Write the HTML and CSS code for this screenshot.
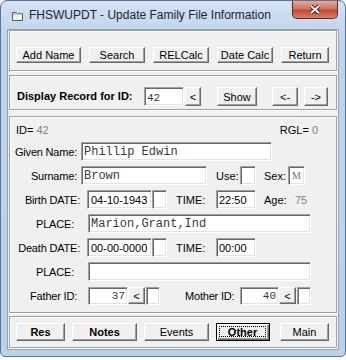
FILE: index.html
```html
<!DOCTYPE html>
<html lang="en">
<head>
  <meta charset="UTF-8" />
  <title>FHSWUPDT - Update Family File Information</title>
  <link rel="stylesheet" href="styles.css">
</head>
<body>

<div class="window">
  <div class="titlebar">
    <svg class="app-icon" width="11" height="11" viewBox="0 0 11 11">
      <path d="M0.5 2.5h4l1 1h5v7h-10z" fill="#f4f4f4" stroke="#5a5a5a"/>
      <path d="M1 4h9" stroke="#9aa4ae"/>
    </svg>
    <span class="title">FHSWUPDT - Update Family File Information</span>
    <div class="close">
      <svg width="14" height="11" viewBox="0 0 14 11">
        <path d="M3 2l8 7M11 2l-8 7" stroke="#4a1c16" stroke-width="4"/>
        <path d="M3 2l8 7M11 2l-8 7" stroke="#fff" stroke-width="2"/>
      </svg>
    </div>
  </div>

  <div class="client">
    <div class="panel toolbar">
      <button class="btn w65">Add Name</button>
      <button class="btn w56">Search</button>
      <button class="btn w56">RELCalc</button>
      <button class="btn w56">Date Calc</button>
      <button class="btn w48">Return</button>
    </div>

    <div class="panel display">
      <span class="display-label">Display Record for ID:</span>
      <input class="field id-field" type="text" value="42">
      <button class="btn tall small-btn">&lt;</button>
      <button class="btn tall show-btn">Show</button>
      <button class="btn tall prev-btn">&lt;-</button>
      <button class="btn tall next-btn">-&gt;</button>
    </div>

    <div class="panel record">
      <div class="row id-row">
        <span>ID= <span class="dim">42</span></span>
        <span>RGL= <span class="dim">0</span></span>
      </div>

      <div class="row">
        <span class="lbl pr4">Given Name:</span>
        <input class="field mono" style="width:191px" type="text" value="Phillip Edwin">
      </div>

      <div class="row">
        <span class="lbl pr4">Surname:</span>
        <input class="field mono" style="width:126px" type="text" value="Brown">
        <span class="use-lbl">Use:</span>
        <input class="field use-box" type="text" value="">
        <span class="sex-lbl">Sex:</span>
        <input class="field sex-box" type="text" value="M">
      </div>

      <div class="row">
        <span class="lbl pr1">Birth DATE:</span>
        <input class="field date" type="text" value="04-10-1943">
        <input class="field tiny" type="text" value="">
        <span class="time-lbl">TIME:</span>
        <input class="field time" type="text" value="22:50">
        <span class="age-lbl">Age:</span>
        <span class="dim age">75</span>
      </div>

      <div class="row">
        <span class="lbl pr7">PLACE:</span>
        <input class="field mono place" type="text" value="Marion,Grant,Ind">
      </div>

      <div class="row">
        <span class="lbl pr1">Death DATE:</span>
        <input class="field date" type="text" value="00-00-0000">
        <input class="field tiny" type="text" value="">
        <span class="time-lbl">TIME:</span>
        <input class="field time" type="text" value="00:00">
      </div>

      <div class="row">
        <span class="lbl pr7">PLACE:</span>
        <input class="field mono place" type="text" value="">
      </div>

      <div class="row">
        <span class="lbl pr4">Father ID:</span>
        <input class="field mono parent" type="text" value="37">
        <button class="btn parent-btn">&lt;</button>
        <input class="field tiny parent-tiny" type="text" value="">
        <span class="mother-lbl">Mother ID:</span>
        <input class="field mono parent mother" type="text" value="40">
        <button class="btn parent-btn">&lt;</button>
        <input class="field tiny parent-tiny" type="text" value="">
      </div>
    </div>

    <div class="panel bottom">
      <button class="btn big bold w49">Res</button>
      <button class="btn big bold w65 ml7">Notes</button>
      <button class="btn big w65 ml7">Events</button>
      <button class="btn big bold default w54 ml7"><span class="focus">Other</span></button>
      <button class="btn big w49 ml10">Main</button>
    </div>
  </div>
</div>

</body>
</html>
```

FILE: styles.css
```css
body { margin: 0; background: #fff; font-family: "Liberation Sans", Arial, sans-serif; font-size: 11px; color: #000; white-space: nowrap; }
.window { width: 346px; height: 357px; box-sizing: border-box; border: 1px solid #5d7190; border-radius: 7px 7px 5px 5px; background: linear-gradient(#d3e1f3, #bed3ec 40px, #bbd0ea); display: flex; flex-direction: column; }
.titlebar { height: 28px; flex-shrink: 0; display: flex; align-items: center; padding-left: 11px; }
.app-icon { display: block; }
.title { margin-left: 6px; font-size: 12px; color: #1b2430; }
.close { margin-left: auto; margin-right: 7px; align-self: flex-start; width: 46px; height: 18px; box-sizing: border-box; border: 1px solid #5a2a24; border-top: none; border-radius: 0 0 5px 5px; background: linear-gradient(#e6a99b, #d27563 45%, #c24a36 55%, #d8806b); display: flex; align-items: center; justify-content: center; }
.close svg { display: block; }

.client { margin: 0 6px; height: 321px; box-sizing: border-box; border: 1px solid #8da2bd; background: #f0f0f0; }
.panel { margin: 0 1px; box-sizing: border-box; border: 1px solid #a0a0a0; box-shadow: inset 1px 1px 0 #fff, 1px 1px 0 #fff; }

.btn { box-sizing: border-box; height: 16px; padding: 0; background: #f0f0f0; border: 1px solid; border-color: #fff #696969 #696969 #fff; box-shadow: inset -1px -1px 0 #a0a0a0; font-family: "Liberation Sans", Arial, sans-serif; font-size: 11px; color: #000; }
.btn.tall { height: 19px; }
.btn.big { height: 18px; }
.bold { font-weight: bold; }
.w48 { width: 48px; }
.w49 { width: 49px; }
.w54 { width: 54px; }
.w56 { width: 56px; }
.w65 { width: 65px; }
.ml7 { margin-left: 7px; }
.ml10 { margin-left: 10px; }

.field { box-sizing: border-box; height: 19px; margin: 0; padding: 0 2px; background: #fff; border: 1px solid; border-color: #a0a0a0 #fff #fff #a0a0a0; box-shadow: inset 1px 1px 0 #696969, inset -1px -1px 0 #e3e3e3; font-family: "Liberation Sans", Arial, sans-serif; font-size: 11px; color: #000; outline: none; }
.mono { font-family: "Liberation Mono", "Courier New", monospace; font-size: 12px; color: #3a3a3a; }

.toolbar { height: 41px; padding: 16px 0 0 6px; display: flex; gap: 8px; align-items: flex-start; }

.display { margin-top: 4px; height: 35px; padding: 11px 0 0 7px; display: flex; align-items: flex-start; }
.display-label { width: 127px; line-height: 19px; font-weight: bold; font-size: 11px; }
.id-field { width: 40px; font-family: "Liberation Mono", "Courier New", monospace; font-size: 11px; color: #3a3a3a; padding-top: 3px; }
.small-btn { width: 16px; margin-left: 1px; }
.show-btn { width: 40px; margin-left: 16px; }
.prev-btn { width: 26px; margin-left: 15px; }
.next-btn { width: 24px; margin-left: 6px; }

.record { margin-top: 6px; height: 197px; padding: 6px 0 0 0; display: flex; flex-direction: column; gap: 5px; }
.row { height: 19px; display: flex; align-items: center; }
.id-row { height: 14px; justify-content: space-between; padding: 0 18px 0 6px; }
.dim { color: #808080; }
.lbl { width: 71px; box-sizing: border-box; text-align: right; letter-spacing: -0.2px; }
.pr1 { padding-right: 1px; }
.pr4 { padding-right: 4px; }
.pr7 { padding-right: 7px; }

.use-lbl { margin-left: 9px; width: 24px; }
.use-box { width: 16px; }
.sex-lbl { margin-left: 8px; width: 24px; }
.sex-box { width: 17px; font-family: "Liberation Serif", serif; font-size: 10px; color: #707070; text-align: center; padding: 0; }
.date { width: 65px; margin-left: 6px; padding-left: 3px; }
.row .date + .tiny { width: 15px; }
.tiny { width: 14px; }
.time-lbl { margin-left: 9px; width: 40px; }
.time { width: 40px; }
.age-lbl { margin-left: 8px; width: 31px; }
.age { font-size: 11px; }
.place { width: 223px; margin-left: 7px; }

.parent { width: 40px; height: 18px; margin-left: 7px; text-align: right; font-size: 11px; }
.parent-btn { width: 17px; height: 17px; }
.parent-tiny { height: 18px; margin-left: 1px; }
.mother-lbl { margin-left: 25px; width: 55px; letter-spacing: -0.2px; }
.parent.mother { width: 39px; margin-left: 0; }

.bottom { margin-top: 3px; height: 32px; padding: 6px 0 0 6px; display: flex; align-items: flex-start; }
.default { border: 1px solid #000; box-shadow: inset 1px 1px 0 #fff, inset -1px -1px 0 #696969, inset -2px -2px 0 #a0a0a0; padding: 2px 3px 3px 2px; display: flex; }
.focus { flex: 1; border: 1px dotted #000; line-height: 10px; }
```
